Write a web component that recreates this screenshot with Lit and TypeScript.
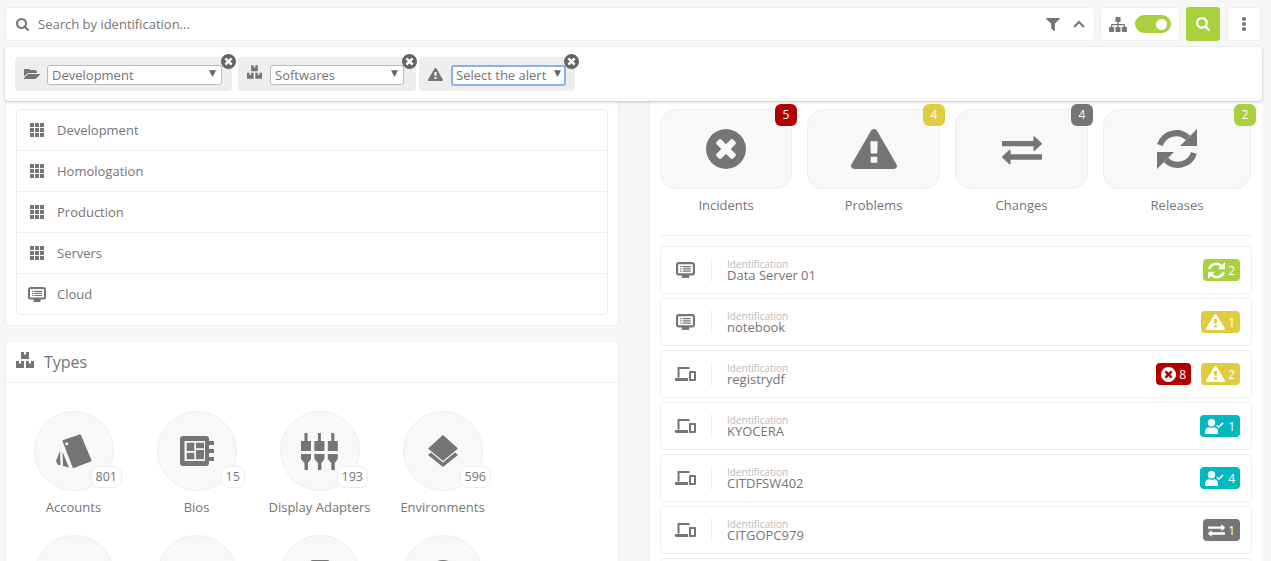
import { LitElement, html, css, svg } from "lit";
import { customElement } from "lit/decorators.js";

const P: Record<string, [string, string]> = {
  search: ["64 128 1664 1664", "M1216 832q0-185-131.5-316.5t-316.5-131.5-316.5 131.5-131.5 316.5 131.5 316.5 316.5 131.5 316.5-131.5 131.5-316.5zm512 832q0 52-38 90t-90 38q-54 0-90-38l-343-342q-179 124-399 124-143 0-273.5-55.5t-225-150-150-225-55.5-273.5 55.5-273.5 150-225 225-150 273.5-55.5 273.5 55.5 225 150 150 225 55.5 273.5q0 220-124 399l343 343q37 37 37 90z"],
  xc: ["128 128 1536 1536", "M1277 1122q0-26-19-45l-181-181 181-181q19-19 19-45 0-27-19-46l-90-90q-19-19-46-19-26 0-45 19l-181 181-181-181q-19-19-45-19-27 0-46 19l-90 90q-19 19-19 46 0 26 19 45l181 181-181 181q-19 19-19 45 0 27 19 46l90 90q19 19 46 19 26 0 45-19l181-181 181 181q19 19 45 19 27 0 46-19l90-90q19-19 19-46zm387-226q0 209-103 385.5t-279.5 279.5-385.5 103-385.5-103-279.5-279.5-103-385.5 103-385.5 279.5-279.5 385.5-103 385.5 103 279.5 279.5 103 385.5z"],
  warn: ["0 0 1792 1664", "M1024 1375v-190q0-14-9.5-23.5t-22.5-9.5h-192q-13 0-22.5 9.5t-9.5 23.5v190q0 14 9.5 23.5t22.5 9.5h192q13 0 22.5-9.5t9.5-23.5zm-2-374l18-459q0-12-10-19-13-11-24-11h-220q-11 0-24 11-10 7-10 21l17 457q0 10 10 16.5t24 6.5h185q14 0 23.5-6.5t10.5-16.5zm-14-934l768 1408q35 63-2 126-17 29-46.5 46t-63.5 17h-1536q-34 0-63.5-17t-46.5-46q-37-63-2-126l768-1408q17-31 47-49t65-18 65 18 47 49z"],
  swap: ["0 128 1792 1536", "M1792 1184v192q0 13-9.5 22.5t-22.5 9.5h-1376v192q0 13-9.5 22.5t-22.5 9.5q-12 0-24-10l-319-320q-9-9-9-22 0-14 9-23l320-320q9-9 23-9 13 0 22.5 9.5t9.5 22.5v192h1376q13 0 22.5 9.5t9.5 22.5zm0-544q0 14-9 23l-320 320q-9 9-23 9-13 0-22.5-9.5t-9.5-22.5v-192h-1376q-13 0-22.5-9.5t-9.5-22.5v-192q0-13 9.5-22.5t22.5-9.5h1376v-192q0-14 9-23t23-9q12 0 24 10l319 319q9 9 9 23z"],
  filter: ["190 256 1412 1408", "M1595 295q17 41-14 70l-493 493v742q0 42-39 59-13 5-25 5-27 0-45-19l-256-256q-19-19-19-45v-486l-493-493q-31-29-14-70 17-39 59-39h1280q42 0 59 39z"],
  sitemap: ["0 128 1792 1536", "M1792 1248v320q0 40-28 68t-68 28h-320q-40 0-68-28t-28-68v-320q0-40 28-68t68-28h96v-192h-512v192h96q40 0 68 28t28 68v320q0 40-28 68t-68 28h-320q-40 0-68-28t-28-68v-320q0-40 28-68t68-28h96v-192h-512v192h96q40 0 68 28t28 68v320q0 40-28 68t-68 28h-320q-40 0-68-28t-28-68v-320q0-40 28-68t68-28h96v-192q0-52 38-90t90-38h512v-192h-96q-40 0-68-28t-28-68v-320q0-40 28-68t68-28h320q40 0 68 28t28 68v320q0 40-28 68t-68 28h-96v192h512q52 0 90 38t38 90v192h96q40 0 68 28t28 68z"],
  folder: ["0 224 1781 1298", "M1781 931q0 35-35 73l-336 396q-43 51-120.5 86.5t-143.5 35.5h-1088q-34 0-60.5-13t-26.5-43q0-35 35-73l336-396q43-51 120.5-86.5t143.5-35.5h1088q34 0 60.5 13t26.5 43zm-343-344v160h-832q-94 0-197 47.5t-164 119.5l-337 396-5 6q0-4-.5-12.5t-.5-12.5v-960q0-92 66-158t158-66h320q92 0 158 66t66 158v32h544q92 0 158 66t66 158z"],
};

const fa = (n: string, cls: string) =>
  html`<svg class=${cls} viewBox=${P[n][0]} preserveAspectRatio="none" fill="currentColor"><path d=${P[n][1]}></path></svg>`;

const cubes = (cls: string) => html`<svg class=${cls} viewBox="0 0 18 16" fill="currentColor"><path d="M5 0h3v2.5h2V0h3v7H5zM0 9h3v2.5h2V9h3v7H0zM10 9h3v2.5h2V9h3v7h-8z"></path></svg>`;
const grid = () => html`<svg class="i-grid" viewBox="0 0 14 14" fill="currentColor">${[0, 5, 10].map((y) => [0, 5, 10].map((x) => svg`<rect x=${x} y=${y} width="4" height="4"></rect>`))}</svg>`;
const monitor = (cls: string) => html`<svg class=${cls} viewBox="0 0 18 15" fill="none" stroke="currentColor"><rect x="1" y="1" width="16" height="10.6" rx="1.5" stroke-width="2"></rect><path d="M4 4.300h1.200M6.300 4.300H14M4 6.400h1.200M6.300 6.400H14M4 8.500h1.200M6.300 8.500H14" stroke-width="1.200"></path><path d="M5.500 13.500h7" stroke-width="3"></path></svg>`;
const laptop = () => html`<svg class="i-mon" viewBox="0 0 21 14" fill="currentColor"><path d="M2.500 0h12v2H4.500v8.500h-2zM0 11h13v3H1.200C.5 14 0 13.400 0 12.700zM15 4h5c.6 0 1 .4 1 1v8c0 .6-.4 1-1 1h-5c-.6 0-1-.4-1-1V5c0-.6.4-1 1-1zm1 2v6h3V6z"></path></svg>`;
const refresh = (cls: string) => html`<svg class=${cls} viewBox="0 0 40 40" fill="none"><path d="M3 16A17 17 0 0 1 31 9" stroke="currentColor" stroke-width="6"></path><path d="M37 24A17 17 0 0 1 9 31" stroke="currentColor" stroke-width="6"></path><path d="M40 0v17H23zM0 40V23h17z" fill="currentColor"></path></svg>`;
const userCheck = () => html`<svg class="t-user" viewBox="0 0 19 15" fill="currentColor"><circle cx="6.500" cy="3.800" r="3.700"></circle><path d="M0 15v-2.500C0 10 2 8.300 4 8.300c1.500.7 3.500.7 5 0 2 0 4 1.700 4 4.200V15z"></path><path d="M11.800 6.200l2 2 4.200-4.300" fill="none" stroke="currentColor" stroke-width="1.600"></path></svg>`;

const accounts = html`<svg class="g-acc" viewBox="0 0 37 35" fill="currentColor"><path d="M8.500 7L25 1.500 35.500 26.500 18.500 33z" stroke="currentColor" stroke-width="2" stroke-linejoin="round"></path><circle cx="11.700" cy="9.800" r="1.500" fill="#f8f8f8"></circle><path d="M5 17L1 27l2 4h2.500zM7.500 18L8 32l6 1.500z"></path></svg>`;
const bios = html`<svg class="g-bios" viewBox="0 0 34 30" fill="currentColor"><rect width="29" height="30" rx="3"></rect><rect x="4.500" y="5" width="20.500" height="20" fill="#f8f8f8"></rect><path d="M6.700 6.700h7.600V15H6.700zM16 6.700h8v5.600h-8zM16 14h8v9.300h-8zM6.700 16.700h7.600v6.600H6.700z"></path><path d="M29 5h5v4h-5zM29 13h5v4h-5zM29 21h5v4h-5z"></path></svg>`;
const adapters = html`<svg class="g-ada" viewBox="0 0 37 37" fill="currentColor">${[0, 13.4, 26.8].map(
  (x) => svg`<path transform="translate(${x} 0)" d="M3.500 0h3v8h3.500v10H0V8h3.500zM0 21h10v5l-3 4v7H3.500v-7L0 26z"></path>`
)}</svg>`;
const layers = html`<svg class="g-lay" viewBox="0 0 30 32" fill="currentColor"><path d="M15 0l15 13.500L15 26 0 13.500zM0 20l3-2.500 12 10 12-10 3 2.500-15 12z"></path></svg>`;
const boxTop = html`<svg class="g-box" viewBox="0 0 20 30" fill="currentColor"><rect width="20" height="30" rx="3"></rect></svg>`;
const roundTop = html`<svg class="g-round" viewBox="0 0 30 30" fill="currentColor"><circle cx="15" cy="15" r="15"></circle></svg>`;

type Row = { icon: "mon" | "lap"; name: string; tags: { k: string; n: number }[] };
const ROWS: Row[] = [
  { icon: "mon", name: "Data Server 01", tags: [{ k: "rel", n: 2 }] },
  { icon: "mon", name: "notebook", tags: [{ k: "prob", n: 1 }] },
  { icon: "lap", name: "registrydf", tags: [{ k: "inc", n: 8 }, { k: "prob", n: 2 }] },
  { icon: "lap", name: "KYOCERA", tags: [{ k: "usr", n: 1 }] },
  { icon: "lap", name: "CITDFSW402", tags: [{ k: "usr", n: 4 }] },
  { icon: "lap", name: "CITGOPC979", tags: [{ k: "chg", n: 1 }] },
];
const TILES = [
  { l: "Incidents", n: 5, k: "inc", i: fa("xc", "b-xc") },
  { l: "Problems", n: 4, k: "prob", i: fa("warn", "b-warn") },
  { l: "Changes", n: 4, k: "chg", i: fa("swap", "b-swap") },
  { l: "Releases", n: 2, k: "rel", i: refresh("b-ref") },
];
const TYPES = [
  { l: "Accounts", n: 801, i: accounts },
  { l: "Bios", n: 15, i: bios },
  { l: "Display Adapters", n: 193, i: adapters },
  { l: "Environments", n: 596, i: layers },
];
const GROUPS = ["Development", "Homologation", "Production", "Servers"];

@customElement("app-root")
export class AppRoot extends LitElement {
  static styles = css`
    :host { display: block; height: 100vh; overflow: hidden; background: #f7f7f7; position: relative;
      font-family: "Open Sans", sans-serif; font-size: 13px; color: #757575; }
    * { box-sizing: border-box; }
    svg { display: block; flex: none; }
    .top { display: flex; height: 34px; margin: 7px 10px 0 5px; }
    .box { background: #fff; border: 1px solid #eee; border-radius: 4px; display: flex; align-items: center; }
    .searchbar { width: 1090px; padding: 0 9px 0 10px; }
    .i-search { width: 13px; height: 13px; margin-right: 9px; }
    .ph { flex: 1; }
    .i-filter { width: 14px; height: 13px; margin-right: 13px; }
    .i-up { width: 12px; height: 8px; }
    .tog { width: 80px; margin-left: 5px; padding-left: 8px; gap: 8px; }
    .i-site { width: 18px; height: 15px; }
    .switch { width: 36px; height: 18px; border-radius: 9px; background: #a8d13e; display: flex; justify-content: flex-end; align-items: center; padding-right: 4px; }
    .knob { width: 11px; height: 11px; border-radius: 50%; background: #fff; }
    .go { width: 34px; margin-left: 6px; background: #a8d13e; border: none; border-radius: 3px; color: #fff; justify-content: center; }
    .go svg { width: 14px; height: 14px; }
    .more { width: 34px; margin-left: 7px; justify-content: center; }
    .i-more { width: 4px; height: 14px; }

    .panel { position: absolute; left: 5px; top: 47px; width: 1257px; height: 54px; background: #fff; border-radius: 4px;
      box-shadow: 0 1px 3px rgba(0,0,0,.25); padding: 10px 0 0 10px; display: flex; z-index: 5; }
    .chip { position: relative; height: 34px; background: #eee; border-radius: 4px; display: flex; align-items: center; padding-left: 9px; }
    .c1 { width: 217px; margin-right: 6px; }
    .c2 { width: 178px; margin-right: 3px; }
    .c3 { width: 156px; }
    .i-folder { width: 16px; height: 10px; margin-right: 7px; }
    .c2 .i-cube { width: 15px; height: 14px; margin: 0 8px 4px 0; }
    .i-warn { width: 15px; height: 13px; margin-right: 8px; }
    .sel { height: 20px; margin-top: 2px; background: #fff; border: 1px solid #bbb; border-radius: 3px; display: flex; justify-content: space-between;
      padding: 0 5px 0 4px; align-items: center; line-height: 18px; }
    .c1 .sel { width: 175px; }
    .c2 .sel { width: 134px; }
    .c3 .sel { width: 115px; height: 21px; border: 2px solid #8ab0ee; padding: 0 3px 0 3px; }
    .arr { font-size: 9px; line-height: 9px; margin-bottom: 3px; color: #666; font-family: "DejaVu Sans", sans-serif; }
    .x { position: absolute; top: -3px; right: -4px; width: 15px; height: 15px; border-radius: 50%; background: #fff; color: #666; }
    .c2 .x { right: -1px; }
    .x svg { width: 15px; height: 15px; }

    .main { display: flex; align-items: flex-start; margin: 6px 9px 0 5px; }
    .left { width: 614px; display: flex; flex-direction: column; gap: 15px; }
    .card { background: #fff; border: 1px solid #eee; border-radius: 4px; }
    .groups { padding: 61px 10px 10px 10px; }
    .list { border: 1px solid #eee; border-radius: 4px; }
    .li { height: 41px; display: flex; align-items: center; padding-left: 13px; border-top: 1px solid #eee; }
    .li:first-child { border-top: none; height: 40px; }
    .i-grid { width: 14px; height: 14px; margin-right: 13px; }
    .i-cloud { width: 18px; height: 15px; margin: 0 11px 0 -2px; }
    .hd { height: 41px; border-bottom: 1px solid #eee; display: flex; align-items: center; padding-left: 10px; font-size: 16px; }
    .hd svg { width: 18px; height: 16px; margin: 0 10px 4px 0; }
    .tgrid { display: grid; grid-template-columns: repeat(4, 123px); padding: 28px 0 0 6px; height: 300px; align-content: start; }
    .ty { display: flex; flex-direction: column; align-items: center; height: 124px; }
    .circle { position: relative; width: 80px; height: 80px; border-radius: 50%; background: #f8f8f8; border: 1px solid #eee;
      display: flex; align-items: center; justify-content: center; }
    .count { position: absolute; left: 56px; top: 54px; height: 22px; min-width: 22px; padding: 0 4px; background: #fff; border: 1px solid #eee;
      border-radius: 8px; font-size: 12.500px; line-height: 20px; text-align: center; }
    .count.n2 { left: 63px; }
    .tl { margin-top: 7px; line-height: 18px; white-space: nowrap; }
    .g-acc { width: 37px; height: 35px; }
    .g-bios { width: 34px; height: 30px; }
    .g-ada { width: 37px; height: 37px; }
    .g-lay { width: 30px; height: 32px; }
    .g-box { width: 20px; height: 30px; }
    .g-round { width: 30px; height: 30px; }

    .right { margin-left: 30px; width: 613px; background: #fff; border-left: 1px solid #eee; padding: 62px 10px 0 10px; height: 600px; }
    .tiles { display: grid; grid-template-columns: 132px 133px 133px 148px; column-gap: 15px; border-bottom: 1px solid #eee; height: 127px; }
    .tile { display: flex; flex-direction: column; align-items: center; }
    .tbox { position: relative; width: 100%; height: 80px; background: #f8f8f8; border: 1px solid #eee; border-radius: 16px;
      display: flex; align-items: center; justify-content: center; }
    .tlab { margin-top: 7px; line-height: 18px; }
    .bdg { position: absolute; top: -6px; right: -6px; width: 22px; height: 22px; border-radius: 6px; color: #fff; font-size: 12px; line-height: 22px; text-align: center; }
    .inc { background: #b00000; }
    .prob { background: #e0cd3f; }
    .chg { background: #757575; }
    .rel { background: #a8d13e; }
    .usr { background: #00b8c0; }
    .b-xc { width: 40px; height: 40px; }
    .b-warn { width: 46px; height: 40px; }
    .b-swap { width: 40px; height: 32px; }
    .b-ref { width: 40px; height: 40px; }
    .rows { display: flex; flex-direction: column; gap: 4px; padding-top: 10px; }
    .row { height: 48px; border: 1px solid #eee; border-radius: 4px; display: flex; align-items: center; padding: 0 11px 0 15px; flex: none; }
    .i-mon { width: 21px; height: 14px; margin-left: -1px; }
    .ico { width: 36px; height: 24px; display: flex; align-items: center; border-right: 1px solid #eee; margin-right: 15px; }
    .ico .i-lg { width: 19px; height: 16px; }
    .info { flex: 1; display: flex; flex-direction: column; }
    .cap { font-size: 10px; line-height: 10px; color: #bbb; }
    .nm { line-height: 11px; margin-top: 1px; }
    .tags { display: flex; gap: 10px; }
    .tag { height: 22px; padding: 0 5px; border-radius: 4px; color: #fff; display: flex; align-items: center; gap: 3px; font-size: 12px; }
    .t-ref { width: 17px; height: 17px; }
    .t-warn { width: 19px; height: 16px; }
    .t-xc { width: 15px; height: 15px; }
    .t-swap { width: 17px; height: 14px; }
    .t-user { width: 19px; height: 15px; margin-right: 1px; }
  `;

  private tagIcon(k: string) {
    if (k === "rel") return refresh("t-ref");
    if (k === "prob") return fa("warn", "t-warn");
    if (k === "inc") return fa("xc", "t-xc");
    if (k === "chg") return fa("swap", "t-swap");
    return userCheck();
  }

  render() {
    return html`
      <div class="top">
        <div class="box searchbar">
          ${fa("search", "i-search")}
          <span class="ph">Search by identification...</span>
          ${fa("filter", "i-filter")}
          <svg class="i-up" viewBox="0 0 12 8" fill="none" stroke="currentColor" stroke-width="2"><path d="M1 7l5-5 5 5"></path></svg>
        </div>
        <div class="box tog">${fa("sitemap", "i-site")}<div class="switch"><div class="knob"></div></div></div>
        <div class="box go">${fa("search", "")}</div>
        <div class="box more"><svg class="i-more" viewBox="0 0 4 14" fill="currentColor"><circle cx="2" cy="2" r="2"></circle><circle cx="2" cy="7" r="2"></circle><circle cx="2" cy="12" r="2"></circle></svg></div>
      </div>

      <div class="panel">
        <div class="chip c1">${fa("folder", "i-folder")}<div class="sel"><span>Development</span><span class="arr">▼</span></div><div class="x">${fa("xc", "")}</div></div>
        <div class="chip c2">${cubes("i-cube")}<div class="sel"><span>Softwares</span><span class="arr">▼</span></div><div class="x">${fa("xc", "")}</div></div>
        <div class="chip c3">${fa("warn", "i-warn")}<div class="sel"><span>Select the alert</span><span class="arr">▼</span></div><div class="x">${fa("xc", "")}</div></div>
      </div>

      <div class="main">
        <div class="left">
          <section class="card groups">
            <div class="list">
              ${GROUPS.map((g) => html`<div class="li">${grid()}<span>${g}</span></div>`)}
              <div class="li">${monitor("i-cloud")}<span>Cloud</span></div>
            </div>
          </section>
          <section class="card">
            <div class="hd">${cubes("")}<span>Types</span></div>
            <div class="tgrid">
              ${TYPES.map((t) => html`<div class="ty"><div class="circle">${t.i}<span class="count ${t.n < 100 ? "n2" : ""}">${t.n}</span></div><span class="tl">${t.l}</span></div>`)}
              <div class="ty"><div class="circle"></div></div>
              <div class="ty"><div class="circle"></div></div>
              <div class="ty"><div class="circle">${boxTop}</div></div>
              <div class="ty"><div class="circle">${roundTop}</div></div>
            </div>
          </section>
        </div>
        <div class="right">
          <div class="tiles">
            ${TILES.map((t) => html`<div class="tile"><div class="tbox">${t.i}<span class="bdg ${t.k}">${t.n}</span></div><span class="tlab">${t.l}</span></div>`)}
          </div>
          <div class="rows">
            ${ROWS.map(
              (r) => html`<div class="row">
                <div class="ico">${r.icon === "mon" ? monitor("i-lg") : laptop()}</div>
                <div class="info"><span class="cap">Identification</span><span class="nm">${r.name}</span></div>
                <div class="tags">${r.tags.map((t) => html`<span class="tag ${t.k}">${this.tagIcon(t.k)}${t.n}</span>`)}</div>
              </div>`
            )}
            <div class="row"></div>
          </div>
        </div>
      </div>
    `;
  }
}
